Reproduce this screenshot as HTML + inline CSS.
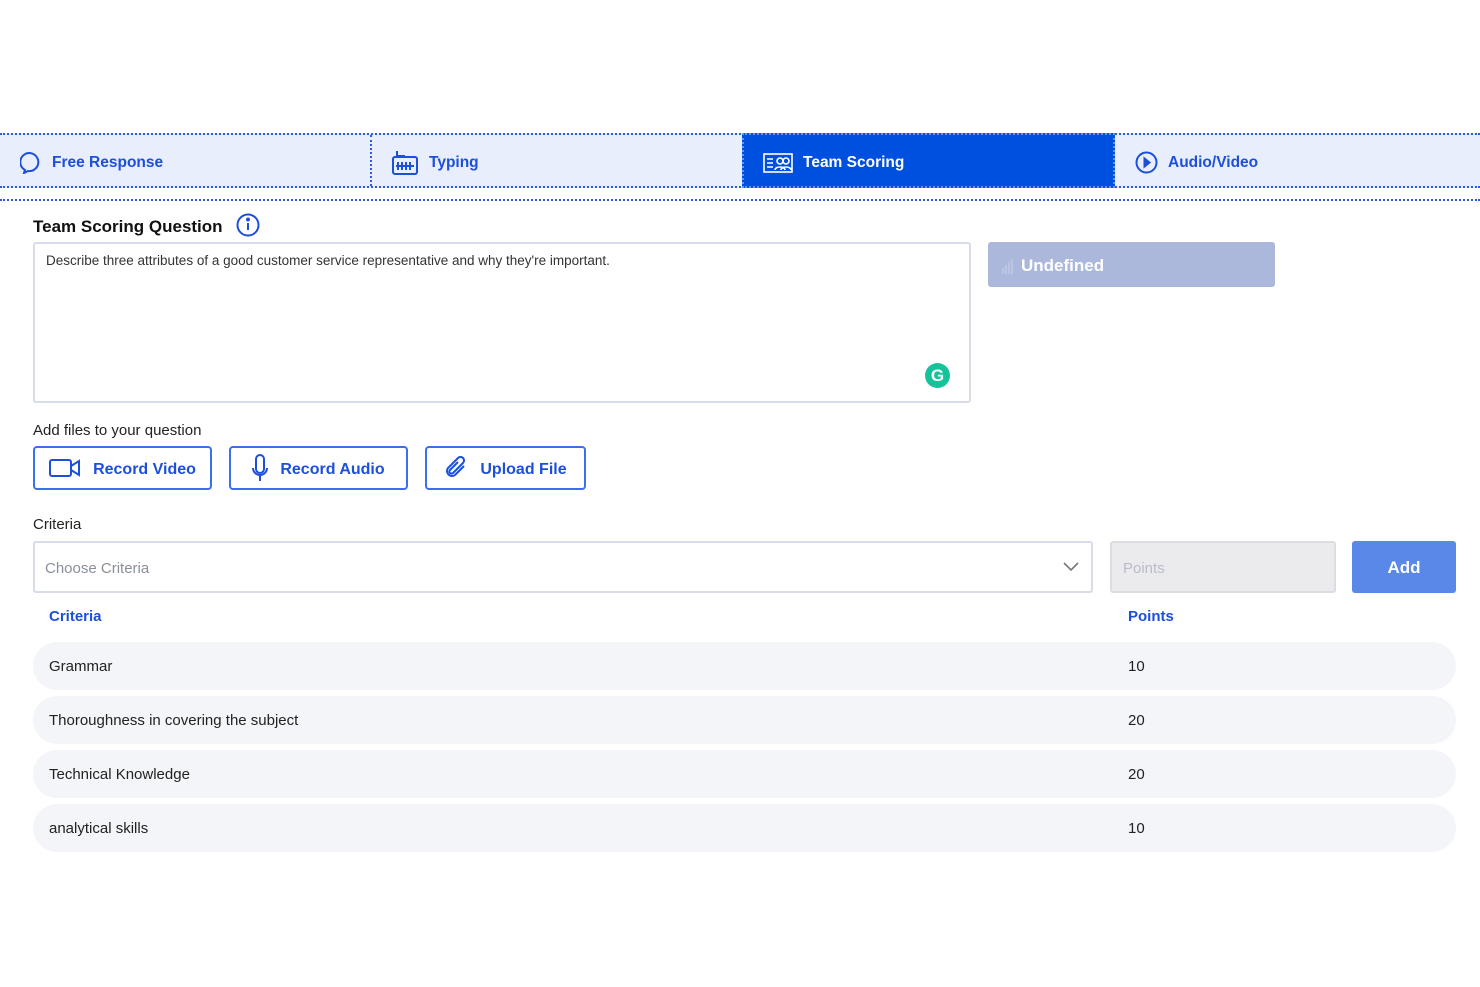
<!DOCTYPE html>
<html><head><style>
*{box-sizing:border-box;margin:0;padding:0}
body{width:1480px;height:987px;background:#fff;font-family:"Liberation Sans",sans-serif;color:#222;position:relative;overflow:hidden}
.a{position:absolute}
.tabs{left:0;top:133px;width:1480px;height:55px;background:#e8eefb;border-top:2px dotted #2a5be0;border-bottom:2px dotted #2a5be0}
.tab{position:absolute;top:2px;height:51px;display:flex;align-items:center;font-size:15.5px;font-weight:bold;color:#1d4fdc}
.tab svg{margin-right:10px}
.line2{left:0;top:199px;width:1480px;border-top:2px dotted #2a5be0}
.btn{position:absolute;top:446px;height:44px;border:2px solid #3d6ef0;border-radius:4px;display:flex;align-items:center;justify-content:center;color:#1d4fdc;font-weight:bold;font-size:16px;padding-top:4px}
.btn svg{margin-right:12px;margin-top:-4px}
.row{position:absolute;left:33px;width:1423px;height:48px;background:#f4f5f9;border-radius:24px;font-size:15px;display:flex;align-items:center}
.row span{position:absolute;top:16px}
</style></head><body>
<div class="a tabs">
 <div class="tab" style="left:20px"><svg width="22" height="22" viewBox="0 0 22 22" fill="none" stroke="#1d4fdc" stroke-width="2"><path d="M5 18 L4 21 L8 19 A9 9 0 1 0 5 18Z"/></svg>Free Response</div>
 <div class="a" style="left:370px;top:0;height:51px;border-left:2px dotted #2a5be0"></div>
 <div class="tab" style="left:391px"><svg width="28" height="26" viewBox="0 0 28 26" fill="none" stroke="#1d4fdc" stroke-width="2"><path d="M6 1v5h8"/><rect x="2" y="7" width="24" height="17" rx="2"/><path d="M7 12v8M11 12v8M15 12v8M19 12v8M5 16h18"/></svg>Typing</div>
 <div class="a" style="left:742px;top:-2px;width:373px;height:55px;background:#0050e0;border:2px dotted #6d8ff0"></div>
 <div class="tab" style="left:763px;color:#fff"><svg width="30" height="20" viewBox="0 0 30 20" fill="none" stroke="#fff" stroke-width="1.6"><rect x="1" y="1" width="28" height="18"/><path d="M4 6h6M4 10h6M4 14h6"/><circle cx="17" cy="8" r="3"/><circle cx="23" cy="8" r="3"/><path d="M12 17c0-4 10-4 10 0M18 17c0-4 10-4 10 0"/></svg>Team Scoring</div>
 <div class="tab" style="left:1135px"><svg width="23" height="23" viewBox="0 0 23 23" fill="none" stroke="#1d4fdc" stroke-width="2"><circle cx="11.5" cy="11.5" r="10"/><path d="M9.5 7.5l5 4-5 4z" fill="#1d4fdc"/></svg>Audio/Video</div>
</div>
<div class="a line2"></div>
<div class="a" style="left:33px;top:217px;font-size:17px;font-weight:bold;color:#111">Team Scoring Question</div>
<svg class="a" style="left:236px;top:213px" width="24" height="24" viewBox="0 0 24 24" fill="none" stroke="#1d4fdc" stroke-width="2"><circle cx="12" cy="12" r="10.5"/><path d="M12 10v7"/><circle cx="12" cy="6.5" r="1" fill="#1d4fdc"/></svg>
<div class="a" style="left:33px;top:242px;width:938px;height:161px;border:2px solid #d8dcea;border-radius:3px;padding:9px 11px;font-size:13.5px;color:#333">Describe three attributes of a good customer service representative and why they're important.</div>
<div class="a" style="left:925px;top:363px;width:25px;height:25px;border-radius:50%;background:#15c39a;color:#fff;font-weight:bold;font-size:17px;text-align:center;line-height:25px">G</div>
<div class="a" style="left:988px;top:242px;width:287px;height:45px;background:#abb7db;border-radius:3px;color:#fff;font-weight:bold;font-size:17px;line-height:47px;padding-left:33px">Undefined</div>
<svg class="a" style="left:1001px;top:256px" width="16" height="18" viewBox="0 0 16 18" stroke="#c5cde6" stroke-width="1.3"><path d="M2 18v-6M5 18v-9M8 18v-12M11 18v-15"/></svg>
<div class="a" style="left:33px;top:422px;font-size:15px;color:#222">Add files to your question</div>
<div class="btn" style="left:33px;width:179px"><svg width="32" height="20" viewBox="0 0 32 20" fill="none" stroke="#1d4fdc" stroke-width="2"><rect x="1" y="2" width="21" height="16" rx="2"/><path d="M22 8l8-5v14l-8-5"/></svg>Record Video</div>
<div class="btn" style="left:229px;width:179px"><svg width="16" height="28" viewBox="0 0 16 28" fill="none" stroke="#1d4fdc" stroke-width="2"><rect x="4" y="1" width="8" height="18" rx="4"/><path d="M1 14a7 7 0 0 0 14 0M8 21v6"/></svg>Record Audio</div>
<div class="btn" style="left:425px;width:161px"><svg width="24" height="24" viewBox="0 0 24 24" fill="none" stroke="#1d4fdc" stroke-width="2"><path d="M20 10L11 19a5 5 0 0 1-7-7l10-10a3.5 3.5 0 0 1 5 5l-10 10a2 2 0 0 1-3-3l8-8"/></svg>Upload File</div>
<div class="a" style="left:33px;top:516px;font-size:15px;color:#222">Criteria</div>
<div class="a" style="left:33px;top:541px;width:1060px;height:52px;border:2px solid #d8dcea;border-radius:3px;font-size:15px;color:#8a8f9c;line-height:52px;padding-left:10px">Choose Criteria</div>
<svg class="a" style="left:1063px;top:562px" width="16" height="10" viewBox="0 0 16 10" fill="none" stroke="#777" stroke-width="1.6"><path d="M1 1l7 7 7-7"/></svg>
<div class="a" style="left:1110px;top:541px;width:226px;height:52px;background:#ebebed;border:2px solid #dcdde3;border-radius:3px;font-size:15px;color:#b8bcc8;line-height:52px;padding-left:11px">Points</div>
<div class="a" style="left:1352px;top:541px;width:104px;height:52px;background:#5a88e8;border-radius:3px;color:#fff;font-weight:bold;font-size:17px;text-align:center;line-height:54px">Add</div>
<div class="a" style="left:49px;top:608px;font-size:15px;font-weight:bold;color:#1d4fdc">Criteria</div>
<div class="a" style="left:1128px;top:608px;font-size:15px;font-weight:bold;color:#1d4fdc">Points</div>
<div class="row" style="top:642px"><span style="left:16px">Grammar</span><span style="left:1095px">10</span></div>
<div class="row" style="top:696px"><span style="left:16px">Thoroughness in covering the subject</span><span style="left:1095px">20</span></div>
<div class="row" style="top:750px"><span style="left:16px">Technical Knowledge</span><span style="left:1095px">20</span></div>
<div class="row" style="top:804px"><span style="left:16px">analytical skills</span><span style="left:1095px">10</span></div>
</body></html>
